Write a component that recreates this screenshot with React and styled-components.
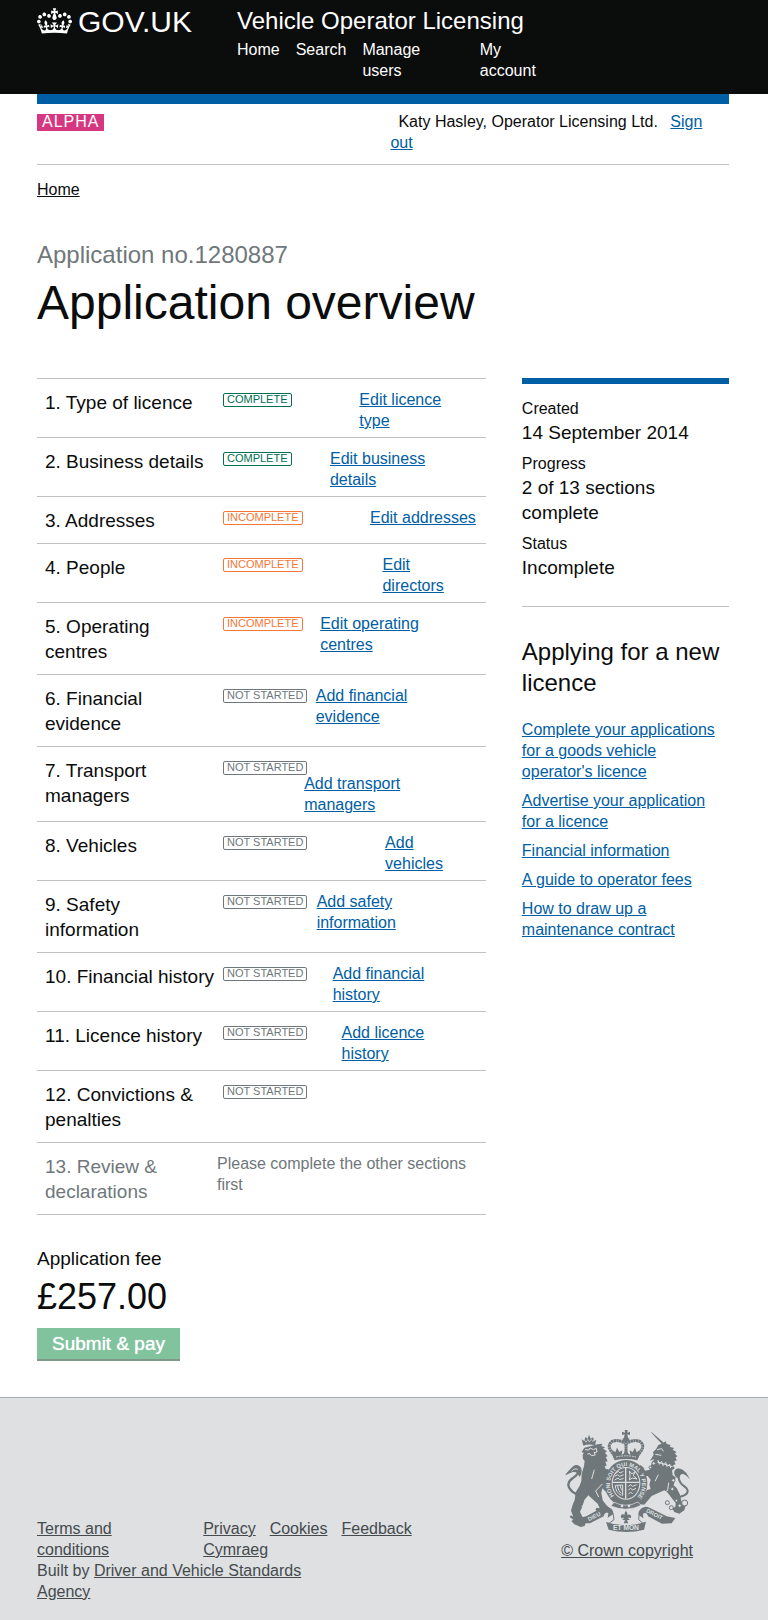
import React from "react";
import styled, { createGlobalStyle } from "styled-components";

const color = {
  ink: "#0b0c0c",
  muted: "#6f777b",
  line: "#bfc1c3",
  link: "#005ea5",
  pink: "#d53880",
  green: "#006f53",
  orange: "#f47738",
  footer: "#dee0e2",
  footerText: "#454a4d",
};

const GlobalStyle = createGlobalStyle`
  *, *::before, *::after { box-sizing: border-box; }
  body {
    margin: 0;
    background: #fff;
    color: ${color.ink};
    font: 16px/21px "Liberation Sans", Arial, Helvetica, sans-serif;
  }
  h1, h2, p, ul, dl, dd { margin: 0; padding: 0; font-weight: 400; }
  ul { list-style: none; }
`;

const Wrap = styled.div`
  padding: 0 39px 0 37px;
`;

/* Shrinks to its text, then the inner percentage padding narrows the line. */
const Fit = styled.span`
  display: block;
  padding-right: ${(p) => (p.$nowrap ? "0" : p.$inset || "10%")};
  white-space: ${(p) => (p.$nowrap ? "nowrap" : "normal")};
`;

/* ---------- header ---------- */

const Header = styled.header`
  background: ${color.ink};
  color: #fff;
`;

const HeaderInner = styled(Wrap)`
  display: flex;
  padding-top: 6px;
  padding-bottom: 13px;
`;

const Logo = styled.a`
  flex: 0 0 200px;
  display: flex;
  align-items: flex-start;
  gap: 6px;
  padding-top: 2px;
  color: #fff;
  text-decoration: none;
  font-size: 30px;
  line-height: 28px;
`;

const ServiceName = styled.p`
  font-size: 24px;
  line-height: 30px;
`;

const Nav = styled.ul`
  display: flex;
  gap: 16px;
  padding-top: 3px;
`;

const NavLink = styled.a`
  color: #fff;
  text-decoration: none;
`;

const UserBar = styled.div`
  display: flex;
  justify-content: space-between;
  align-items: flex-start;
  padding: 7px 0 11px;
  border-top: 10px solid ${color.link};
  border-bottom: 1px solid ${color.line};
`;

const Phase = styled.strong`
  margin-top: 3px;
  padding: 0 5px 2px;
  background: ${color.pink};
  color: #fff;
  font-weight: 400;
  line-height: 15px;
  letter-spacing: 1px;
`;

const UserName = styled.span`
  padding: 0 8px;
`;

const Link = styled.a`
  color: ${(p) => p.$tone || color.link};
  text-decoration: underline;
`;

/* ---------- page ---------- */

const Breadcrumb = styled.nav`
  padding-top: 14px;
`;

const Caption = styled.p`
  margin-top: 40px;
  color: ${color.muted};
  font-size: 24px;
  line-height: 30px;
`;

const Title = styled.h1`
  margin: 8px 0 50px;
  font-size: 48px;
  line-height: 50px;
`;

const Columns = styled.div`
  display: grid;
  grid-template-columns: minmax(0, 13fr) minmax(0, 6fr);
  gap: 36px;
  align-items: start;
`;

const Sections = styled.ul`
  border-bottom: 1px solid ${color.line};
`;

const Section = styled.li`
  display: grid;
  grid-template-columns: 170px minmax(0, 1fr);
  padding: 0 10px 0 8px;
  border-top: 1px solid ${color.line};
  color: ${(p) => (p.$muted ? color.muted : "inherit")};
`;

const SectionName = styled.p`
  padding: 11px 0 10px;
  font-size: 19px;
  line-height: 25px;
`;

const SectionBody = styled.div`
  display: flex;
  flex-wrap: wrap;
  align-items: flex-start;
  align-content: flex-start;
  padding: 10px 0 6px 8px;
`;

const SectionNote = styled.p`
  padding: 10px 0 6px 2px;
`;

const tagColor = {
  COMPLETE: color.green,
  INCOMPLETE: color.orange,
  "NOT STARTED": color.muted,
};

const Tag = styled.span`
  margin: 4px 0 -2px;
  padding: 0 3px 2px;
  border: 1px solid currentColor;
  border-radius: 2px;
  color: ${(p) => tagColor[p.$status]};
  font-size: 11px;
  line-height: 10px;
  white-space: nowrap;
`;

const ActionLink = styled(Link)`
  margin-left: auto;
`;

const Fee = styled.section`
  padding: 31px 0 36px;
`;

const FeeLabel = styled.p`
  font-size: 19px;
  line-height: 25px;
`;

const FeeAmount = styled.p`
  margin: 6px 0 11px;
  font-size: 36px;
  line-height: 40px;
`;

const Submit = styled.button`
  display: block;
  padding: 3px 15px 5px;
  border: 0;
  background: #80c39d;
  box-shadow: inset 0 -2px 0 #80988a;
  color: #fff;
  font: inherit;
  font-size: 19px;
  line-height: 25px;
  text-shadow: 0 0 1px #fff;
`;

/* ---------- sidebar ---------- */

const Facts = styled.dl`
  padding: 14px 0 26px;
  border-top: 6px solid ${color.link};
  border-bottom: 1px solid ${color.line};
`;

const Fact = styled.div`
  & + & {
    margin-top: 8px;
  }
`;

const FactValue = styled.dd`
  padding-top: 1px;
  font-size: 19px;
  line-height: 25px;
`;

const SideTitle = styled.h2`
  margin: 29px 0 21px;
  font-size: 24px;
  line-height: 31px;
`;

const SideLinks = styled.ul`
  display: grid;
  gap: 8px;
  padding-right: 8px;
`;

/* ---------- footer ---------- */

const Footer = styled.footer`
  border-top: 1px solid #a1acb2;
  background: ${color.footer};
  color: ${color.footerText};
`;

const FooterInner = styled(Wrap)`
  display: flex;
  justify-content: space-between;
  align-items: flex-start;
  padding-top: 32px;
  padding-bottom: 18px;
`;

const FooterMeta = styled.div`
  padding-top: 88px;
`;

const FooterLinks = styled.ul`
  display: flex;
  gap: 15px;
`;

const FooterGroup = styled.ul`
  display: flex;
  flex-wrap: wrap;
  column-gap: 14px;
  max-width: 240px;
`;

const BuiltBy = styled.p`
  width: fit-content;
`;

const Copyright = styled.a`
  display: flex;
  flex-direction: column;
  align-items: center;
  gap: 8px;
  margin-right: 36px;
  color: inherit;
  white-space: nowrap;
`;

/* ---------- drawings ---------- */

const Crown = () => (
  <svg width="35" height="26" viewBox="0 0 132 97" fill="#fff" aria-hidden="true">
    <path d="M25 30.2c3.5 1.5 7.7-.2 9.1-3.7 1.5-3.6-.2-7.8-3.9-9.2-3.6-1.4-7.6.3-9.1 3.9-1.4 3.5.3 7.5 3.9 9zM9 39.5c3.6 1.5 7.8-.2 9.2-3.7 1.5-3.6-.2-7.8-3.9-9.1-3.6-1.5-7.6.2-9.1 3.8-1.4 3.5.3 7.5 3.8 9zM4.4 57.2c3.5 1.5 7.7-.2 9.1-3.8 1.5-3.6-.2-7.7-3.9-9.1-3.5-1.5-7.6.3-9.1 3.8-1.4 3.5.3 7.6 3.9 9.1zm38.3-21.4c3.5 1.5 7.7-.2 9.1-3.8 1.5-3.6-.2-7.7-3.9-9.1-3.6-1.5-7.6.3-9.1 3.8-1.3 3.6.4 7.7 3.9 9.1zm64.4-5.6c-3.6 1.5-7.8-.2-9.1-3.7-1.5-3.6.2-7.8 3.8-9.2 3.6-1.4 7.7.3 9.2 3.9 1.3 3.5-.4 7.5-3.9 9zm15.9 9.3c-3.6 1.5-7.7-.2-9.1-3.7-1.5-3.6.2-7.8 3.7-9.1 3.6-1.5 7.7.2 9.2 3.8 1.5 3.5-.3 7.5-3.8 9zm4.7 17.7c-3.6 1.5-7.8-.2-9.2-3.8-1.5-3.6.2-7.7 3.9-9.1 3.6-1.5 7.7.3 9.2 3.8 1.3 3.5-.4 7.6-3.9 9.1zM89.3 35.8c-3.6 1.5-7.8-.2-9.2-3.8-1.4-3.6.2-7.7 3.9-9.1 3.6-1.5 7.7.3 9.2 3.8 1.4 3.6-.3 7.7-3.9 9.1zM69.7 17.7l8.9 4.7V9.3l-8.9 2.8c-.2-.3-.5-.6-.9-.9L72.4 0H59.6l3.5 11.2c-.3.3-.6.5-.9.9l-8.8-2.8v13.1l8.8-4.7c.3.3.6.7.9.9l-5 15.4v.1c-.2.8-.4 1.6-.4 2.4 0 4.1 3.1 7.5 7 8.1h.2c.3 0 .7.1 1 .1.4 0 .7 0 1-.1h.2c4-.6 7.1-4.1 7.1-8.1 0-.8-.1-1.7-.4-2.4V34l-5.1-15.4c.4-.2.7-.6 1-.9zM66 92.8c16.9 0 32.8 1.1 47.1 3.2 4-16.9 8.9-26.7 14-33.5l-9.6-3.4c1 4.9 1.1 7.2 0 10.2-1.5-1.4-3-4.3-4.2-8.7L108.6 76c2.8-2 5-3.2 7.5-3.3-4.4 9.4-10 11.9-13.6 11.2-4.3-.8-6.3-4.6-5.6-7.9 1-4.7 5.7-5.9 8-.5 4.3-8.7-3-11.4-7.6-8.8 7.1-7.2 7.9-13.5 2.1-21.1-8 6.1-8.1 12.3-4.5 20.8-4.7-5.4-12.1-2.5-9.5 6.2 3.4-5.2 7.9-2 7.2 3.1-.6 4.3-6.4 7.8-13.5 7.2-10.3-.9-10.9-8-11.2-13.8 2.5-.5 7.1 1.8 11 7.3L80.2 60c-4.1 4.4-8 5.3-12.3 5.4 1.4-4.4 8-11.6 8-11.6H55.5s6.4 7.2 7.9 11.6c-4.2-.1-8-1-12.3-5.4l1.4 16.4c3.9-5.5 8.5-7.7 10.9-7.3-.3 5.8-.9 12.8-11.1 13.8-7.2.6-12.9-2.9-13.5-7.2-.7-5 3.8-8.3 7.1-3.1 2.7-8.7-4.6-11.6-9.4-6.2 3.7-8.5 3.6-14.7-4.6-20.8-5.8 7.6-5 13.9 2.2 21.1-4.7-2.6-11.9.1-7.7 8.8 2.3-5.5 7.1-4.2 8.1.5.7 3.3-1.3 7.1-5.7 7.9-3.5.7-9-1.8-13.5-11.2 2.5.1 4.7 1.3 7.5 3.3l-4.7-15.4c-1.2 4.4-2.7 7.2-4.3 8.7-1.1-3-.9-5.3 0-10.2l-9.5 3.4c5 6.9 9.9 16.7 14 33.5 14.8-2.1 30.8-3.2 47.7-3.2z" />
  </svg>
);

const Crest = () => (
  <svg width="125" height="102" viewBox="75 90 375 306" fill={color.muted} aria-hidden="true">
    {/* lion */}
    <path d="M130 137l-5-19 8 5 3-12 7 5 4-12 5 12 7-4 3 11 7-3-4 16c-12-3-23-3-35 1z" />
    <path d="M133 119l5 8 6-9 4 8 6-8 5 7 5-7" fill="none" stroke={color.footer} strokeWidth="2" />
    <path d="M133 143l20-5 20-5 14-2-3 7 11 4-6 4 12 8-6 4 8 11-6 2 6 13-7 1 4 12-6 1 3 9 8 1 6 8-7 5-5 19 9 5-8 8 10 7-5 5 10 7-5 9-11-4-12-12-3 14 4 22 11 14 8 8-2 11-10 6-18-2-11-9 4-6 9 2-6-14-19-17-9-8-12 14-5 18-8 17 9 19 8 14-3 10-12 3-19-8-9-10 6-4-11-8 4-5 7 4-7-18 5-18 6-14 3-23 11-18 6-15 1-22 7-24 2-15-5-6-1-11 3-7-6-3z" />
    <path d="M135 149l11 1 4-6 10 5 9-4 2 11-9 2 4 7-12 2-4-6-8 1M163 209l-8 28M187 252l-20 21 9 18M143 298l-18 23" fill="none" stroke={color.footer} strokeWidth="3" />
    <path d="M111 284c-8-4-18-11-23-20-7-13 1-24 12-31 10-7 17-14 16-25-1-8-9-10-14-5" fill="none" stroke={color.muted} strokeWidth="7" />
    <path d="M76 226c3-9 11-13 17-21 7-9 17-13 24-8 11 6 10 24 1 34-4-13-11-18-22-14-8 3-12 6-20 9z" />
    <path d="M95 214c6-8 14-9 19-5" fill="none" stroke={color.footer} strokeWidth="3" />

    {/* unicorn */}
    <path d="M332 96l5 2 41 36-6 5z" />
    <path d="M341 164l-2-8 9-8 7-13 13-5 9-6 3 8 12 3-3 5 13 4-4 5 12 8-6 3 8 9-6 4 5 8-8 3 4 9-8 3 5 9-8 6 2 15 9 6-6 24 9 8 10 20 4 19 13 14-4 14-15 10-15-5-7-12 10-3 1-12-12-15-12-16-10-7-20 9-18 8-12 14-10 12-15-1-6-7 13-8 10-17 6-11 11-3-4-13 4-15-9-11-13 1-14-4-2 13 9 8-9 3-11-9-5-13 5-14 14-4-1-8 6-6 9 8 4 9 14-3 7-22 7-10-13 5z" />
    <path d="M351 149l14-3 5 8M346 163l18 3M352 186l46 14M354 180l4 13 7-9 4 13 8-10 4 13 8-8 3 12M355 224l-10 20M386 248l-3 23-24 13" fill="none" stroke={color.footer} strokeWidth="3" />
    <path d="M412 291c15 0 30-7 31-17 1-11-13-15-20-24-8-11-8-23-2-30" fill="none" stroke={color.muted} strokeWidth="6" />
    <path d="M450 238c-5-8-8-16-14-22-8-9-22-15-30-7-7 7-3 19 8 26 2-9 9-15 18-12 7 3 11 8 18 15z" />
    <g fill={color.footer} stroke={color.muted} strokeWidth="3">
      <circle cx="341" cy="190" r="5" /><circle cx="331" cy="202" r="4" />
      <circle cx="400" cy="241" r="5" /><circle cx="397" cy="267" r="5" />
      <circle cx="382" cy="308" r="6" /><circle cx="394" cy="323" r="6" />
      <circle cx="409" cy="302" r="4" /><circle cx="419" cy="317" r="5" />
      <circle cx="434" cy="309" r="9" />
    </g>

    {/* crown */}
    <path d="M254 90h9l-1 8 8-3v10l-8-2 3 15h-14l3-15-8 2v-10l9 3z" />
    <rect x="248" y="115" width="20" height="8" rx="2" />
    <path d="M224 168c-10-14-20-24-15-35 6-16 33-13 47-3M292 168c10-14 20-24 15-35-6-16-33-13-47-3M258 123v38" fill="none" stroke={color.muted} strokeWidth="9" strokeDasharray="7 1" />
    <path d="M219 170l-2-20 9 7 5-14 7 13 9-5-2 14 7-5 6-17 6 17 7 5-2-14 9 5 7-13 5 14 9-7-2 20-5 11q-34-8-68 0z" />
    <path d="M228 171q30-7 60 0" fill="none" stroke={color.footer} strokeWidth="3" strokeDasharray="5 3" />

    {/* garter and shield */}
    <ellipse cx="258" cy="250" rx="64" ry="70" />
    <ellipse cx="258" cy="250" rx="43" ry="49" fill={color.footer} />
    <ellipse cx="258" cy="250" rx="40" ry="46" />
    <path d="M257 204v92M218 247h80" stroke={color.footer} strokeWidth="4" />
    <g fill="none" stroke={color.footer} strokeWidth="3">
      <path d="M228 219l7-5 5 5 10-5M224 229l9-5 6 5 12-5M224 240l10-6 5 5 12-4" />
      <path d="M265 259l7-5 6 5 12-5M265 270l7-5 6 5 10-5M265 282l7-5 6 4" />
      <path d="M268 213l8 9 9-7-5 12 11 10-14-3-9 6 2-13z" />
      <path d="M226 256c0 14 7 24 18 30M233 256c0 11 5 20 12 24M241 256c0 7 3 12 6 16M226 256l22-1v32" />
    </g>
    <path id="garter" d="M222 288a48 54 0 1 1 72 0" fill="none" />
    <text fill={color.footer} fontSize="17" fontWeight="700">
      <textPath href="#garter">HONI SOIT QUI MAL Y PENSE</textPath>
    </text>
    <path d="M222 307q36 18 72-1l9 10q-44 22-90 2z" stroke={color.footer} strokeWidth="2" />
    <circle cx="246" cy="318" r="4" fill={color.footer} />
    <circle cx="267" cy="318" r="4" fill={color.footer} />

    {/* motto scroll */}
    <path d="M116 354l23-5 45-25q13-8 25-1 13 7 10 20l-16 10 2-14q-10-5-14 10l-41 21-27 0z" />
    <path d="M406 354l-26-5-50-25q-14-8-25 1-12 9-9 20l14 10-1-14q11-6 15 8l42 22 29-1z" />
    <path d="M198 366q55 20 120-1l-6 24q-52 14-106 0z" />
    <path d="M206 371l16-12-3-20-16-6M310 371l-14-12 2-20 15-5" fill="none" stroke={color.muted} strokeWidth="3" />
    <path d="M258 332c-6 8-6 13-2 19-2-10-10-10-13-4-2 7 4 10 7 5 2 4 1 7-5 8h10l-4 10h14l-4-10h11c-7-1-8-4-6-8 4 5 9 1 7-5-4-6-12-5-13 4 4-7 3-12-2-19z" />
    <path id="motto-left" d="M147 364l52-27" fill="none" />
    <path id="motto-right" d="M317 336l60 30" fill="none" />
    <g fill={color.footer} fontSize="17" fontWeight="700">
      <text><textPath href="#motto-left">DIEU</textPath></text>
      <text><textPath href="#motto-right">DROIT</textPath></text>
      <text x="258" y="391" fontSize="20" textAnchor="middle">ET MON</text>
    </g>
  </svg>
);

/* ---------- data ---------- */

const navItems = ["Home", "Search", "Manage users", "My account"];

const sections = [
  ["Type of licence", "COMPLETE", "Edit licence type"],
  ["Business details", "COMPLETE", "Edit business details"],
  ["Addresses", "INCOMPLETE", "Edit addresses", true],
  ["People", "INCOMPLETE", "Edit directors"],
  ["Operating centres", "INCOMPLETE", "Edit operating centres"],
  ["Financial evidence", "NOT STARTED", "Add financial evidence"],
  ["Transport managers", "NOT STARTED", "Add transport managers"],
  ["Vehicles", "NOT STARTED", "Add vehicles"],
  ["Safety information", "NOT STARTED", "Add safety information"],
  ["Financial history", "NOT STARTED", "Add financial history"],
  ["Licence history", "NOT STARTED", "Add licence history"],
  ["Convictions & penalties", "NOT STARTED", null],
];

const facts = [
  ["Created", "14 September 2014"],
  ["Progress", "2 of 13 sections complete"],
  ["Status", "Incomplete"],
];

const guides = [
  "Complete your applications for a goods vehicle operator's licence",
  "Advertise your application for a licence",
  "Financial information",
  "A guide to operator fees",
  "How to draw up a maintenance contract",
];

const footerItems = ["Privacy", "Cookies", "Feedback", "Cymraeg"];

export default function App() {
  return (
    <>
      <GlobalStyle />
      <Header>
        <HeaderInner>
          <Logo href="#">
            <Crown />
            <span>GOV.UK</span>
          </Logo>
          <div>
            <ServiceName>Vehicle Operator Licensing</ServiceName>
            <nav>
              <Nav>
                {navItems.map((item) => (
                  <li key={item}>
                    <Fit $nowrap={!item.includes(" ")}>
                      <NavLink href="#">{item}</NavLink>
                    </Fit>
                  </li>
                ))}
              </Nav>
            </nav>
          </div>
        </HeaderInner>
      </Header>

      <Wrap>
        <UserBar>
          <Phase>ALPHA</Phase>
          <div>
            <Fit $inset="5%">
              <UserName>Katy Hasley, Operator Licensing Ltd.</UserName>{" "}
              <Link href="#">Sign out</Link>
            </Fit>
          </div>
        </UserBar>

        <Breadcrumb>
          <Link href="#" $tone={color.ink}>Home</Link>
        </Breadcrumb>

        <main>
          <Caption>Application no.1280887</Caption>
          <Title>Application overview</Title>
          <Columns>
            <div>
              <Sections>
                {sections.map(([name, status, action, nowrap], i) => (
                  <Section key={name}>
                    <SectionName>{`${i + 1}. ${name}`}</SectionName>
                    <SectionBody>
                      <Tag $status={status}>{status}</Tag>
                      {action && (
                        <ActionLink href="#">
                          <Fit $nowrap={nowrap}>{action}</Fit>
                        </ActionLink>
                      )}
                    </SectionBody>
                  </Section>
                ))}
                <Section $muted>
                  <SectionName>13. Review &amp; declarations</SectionName>
                  <SectionNote>Please complete the other sections first</SectionNote>
                </Section>
              </Sections>
              <Fee>
                <FeeLabel>Application fee</FeeLabel>
                <FeeAmount>£257.00</FeeAmount>
                <Submit type="button">Submit &amp; pay</Submit>
              </Fee>
            </div>

            <aside>
              <Facts>
                {facts.map(([term, value]) => (
                  <Fact key={term}>
                    <dt>{term}</dt>
                    <FactValue>{value}</FactValue>
                  </Fact>
                ))}
              </Facts>
              <SideTitle>Applying for a new licence</SideTitle>
              <SideLinks>
                {guides.map((guide) => (
                  <li key={guide}>
                    <Link href="#">{guide}</Link>
                  </li>
                ))}
              </SideLinks>
            </aside>
          </Columns>
        </main>
      </Wrap>

      <Footer>
        <FooterInner>
          <FooterMeta>
            <FooterLinks>
              <li>
                <Fit>
                  <Link href="#" $tone={color.footerText}>Terms and conditions</Link>
                </Fit>
              </li>
              <li>
                <FooterGroup>
                  {footerItems.map((item) => (
                    <li key={item}>
                      <Link href="#" $tone={color.footerText}>{item}</Link>
                    </li>
                  ))}
                </FooterGroup>
              </li>
            </FooterLinks>
            <BuiltBy>
              <Fit>
                Built by{" "}
                <Link href="#" $tone={color.footerText}>Driver and Vehicle Standards Agency</Link>
              </Fit>
            </BuiltBy>
          </FooterMeta>
          <Copyright href="#">
            <Crest />
            <span>© Crown copyright</span>
          </Copyright>
        </FooterInner>
      </Footer>
    </>
  );
}
